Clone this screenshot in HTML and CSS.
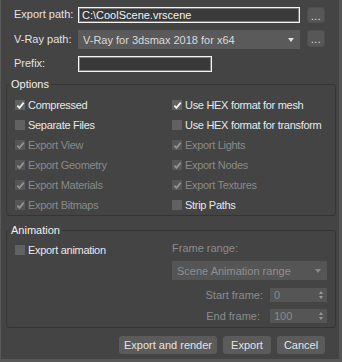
FILE: index.html
```html
<!DOCTYPE html>
<html>
<head>
<meta charset="utf-8">
<link rel="stylesheet" href="styles.css">
</head>
<body>
<div class="dlg">
  <div class="row r1">
    <span class="lbl">Export path:</span>
    <div class="input path">C:\CoolScene.vrscene</div>
    <div class="dots">...</div>
  </div>
  <div class="row r2">
    <span class="lbl">V-Ray path:</span>
    <div class="combo vray"><span>V-Ray for 3dsmax 2018 for x64</span><i class="arrow"></i></div>
    <div class="dots">...</div>
  </div>
  <div class="row r3">
    <span class="lbl">Prefix:</span>
    <div class="input prefix"></div>
  </div>

  <fieldset class="grp options">
    <legend>Options</legend>
    <div class="grid">
      <label class="chk on"><i class="box"><svg viewBox="0 0 10 10"><path d="M1.5 5.2 L3.8 7.6 L8.6 1.8" /></svg></i>Compressed</label>
      <label class="chk on"><i class="box"><svg viewBox="0 0 10 10"><path d="M1.5 5.2 L3.8 7.6 L8.6 1.8" /></svg></i>Use HEX format for mesh</label>
      <label class="chk"><i class="box"></i>Separate Files</label>
      <label class="chk"><i class="box"></i>Use HEX format for transform</label>
      <label class="chk on dis"><i class="box"><svg viewBox="0 0 10 10"><path d="M1.5 5.2 L3.8 7.6 L8.6 1.8" /></svg></i>Export View</label>
      <label class="chk on dis"><i class="box"><svg viewBox="0 0 10 10"><path d="M1.5 5.2 L3.8 7.6 L8.6 1.8" /></svg></i>Export Lights</label>
      <label class="chk on dis"><i class="box"><svg viewBox="0 0 10 10"><path d="M1.5 5.2 L3.8 7.6 L8.6 1.8" /></svg></i>Export Geometry</label>
      <label class="chk on dis"><i class="box"><svg viewBox="0 0 10 10"><path d="M1.5 5.2 L3.8 7.6 L8.6 1.8" /></svg></i>Export Nodes</label>
      <label class="chk on dis"><i class="box"><svg viewBox="0 0 10 10"><path d="M1.5 5.2 L3.8 7.6 L8.6 1.8" /></svg></i>Export Materials</label>
      <label class="chk on dis"><i class="box"><svg viewBox="0 0 10 10"><path d="M1.5 5.2 L3.8 7.6 L8.6 1.8" /></svg></i>Export Textures</label>
      <label class="chk on dis"><i class="box"><svg viewBox="0 0 10 10"><path d="M1.5 5.2 L3.8 7.6 L8.6 1.8" /></svg></i>Export Bitmaps</label>
      <label class="chk"><i class="box"></i>Strip Paths</label>
    </div>
  </fieldset>

  <fieldset class="grp anim">
    <legend>Animation</legend>
    <div class="animbody">
      <div class="animleft">
        <label class="chk"><i class="box"></i>Export animation</label>
      </div>
      <div class="animright">
        <div class="frlabel">Frame range:</div>
        <div class="combo range"><span>Scene Animation range</span><i class="arrow"></i></div>
        <div class="spinrow"><span class="slbl">Start frame:</span><div class="spin"><span>0</span><i class="updown"><i class="up"></i><i class="down"></i></i></div></div>
        <div class="spinrow end"><span class="slbl">End frame:</span><div class="spin"><span>100</span><i class="updown"><i class="up"></i><i class="down"></i></i></div></div>
      </div>
    </div>
  </fieldset>

  <div class="buttons">
    <div class="btn wide">Export and render</div>
    <div class="btn">Export</div>
    <div class="btn">Cancel</div>
  </div>
</div>
</body>
</html>
```

FILE: styles.css
```css
html, body {
  margin: 0;
  padding: 0;
  background: #444444;
}

.dlg {
  width: 342px;
  height: 362px;
  box-sizing: border-box;
  background: #444444;
  border-left: 1px solid #585858;
  border-right: 3px solid #555555;
  border-bottom: 3px solid #585858;
  padding-top: 7px;
  font-family: "Liberation Sans", Arial, sans-serif;
  font-size: 11px;
  color: #e2e2e2;
  white-space: nowrap;
}

.row {
  display: flex;
  align-items: flex-start;
  padding-left: 13px;
}

.r2 { margin-top: 7px; }
.r3 { margin-top: 7px; }

.lbl {
  width: 64px;
  line-height: 15px;
  flex: none;
}

.r2 .lbl { line-height: 18px; }

.input {
  box-sizing: border-box;
  height: 16px;
  border: 1px solid #f4f4f4;
  box-shadow: inset 0 0 0 1px #7a7a7a;
  background: #3a3a3a;
  color: #f2f2f2;
  padding-left: 3px;
  line-height: 14px;
  font-size: 11px;
}

.path { width: 222px; }
.prefix { width: 134px; }

.dots {
  width: 18px;
  height: 16px;
  margin-left: 7px;
  border-radius: 3px;
  background: #575757;
  color: #e6e6e6;
  text-align: center;
  line-height: 18px;
  font-size: 10px;
  letter-spacing: 0.5px;
  box-sizing: border-box;
  border: 1px solid #4e4e4e;
}

.r2 .dots { height: 17px; }

.combo {
  box-sizing: border-box;
  display: flex;
  align-items: center;
  justify-content: space-between;
  background: #5a5a5a;
  color: #dadada;
  padding: 0 6px 0 5px;
  font-size: 11px;
}

.vray {
  width: 222px;
  height: 19px;
}

.arrow {
  width: 0;
  height: 0;
  border-left: 3px solid transparent;
  border-right: 3px solid transparent;
  border-top: 4px solid #e0e0e0;
}

.grp {
  margin: 0 3px 0 5px;
  padding: 0;
  border: 1px solid #353535;
  border-radius: 3px;
  min-width: 0;
}

.grp legend {
  padding: 0 2px;
  margin-left: 2px;
  line-height: 13px;
  font-size: 11px;
  color: #f0f0f0;
}

.options { margin-top: 6px; }

.grid {
  display: grid;
  grid-template-columns: 157px 1fr;
  grid-auto-rows: 20px;
  padding: 4px 0 0 8px;
}

.chk {
  display: flex;
  align-items: center;
  gap: 3px;
  font-size: 11px;
  letter-spacing: -0.3px;
  color: #e8e8e8;
  height: 20px;
}

.chk.dis { color: #8a8a8a; }

.box {
  width: 10px;
  height: 10px;
  flex: none;
  background: #616161;
  display: flex;
  align-items: center;
  justify-content: center;
}

.chk.dis .box { background: #565656; }

.box svg {
  width: 9px;
  height: 9px;
  fill: none;
  stroke: #f4f4f4;
  stroke-width: 2;
}

.chk.dis .box svg { stroke: #929292; }

.anim { margin-top: 8px; }

.animbody {
  display: flex;
  padding: 3px 0 4px 8px;
}

.animleft {
  width: 157px;
  flex: none;
}

.animright {
  width: 155px;
  padding-top: 1px;
}

.frlabel {
  height: 14px;
  line-height: 14px;
  color: #8c8c8c;
  font-size: 11px;
}

.range {
  margin-top: 6px;
  height: 19px;
  background: #555555;
  color: #8f8f8f;
}

.range .arrow { border-top-color: #8a8a8a; }

.spinrow {
  display: flex;
  justify-content: flex-end;
  align-items: center;
  margin-top: 8px;
  height: 14px;
}

.spinrow.end { margin-top: 7px; }

.slbl {
  color: #8c8c8c;
  font-size: 11px;
  margin-right: 7px;
}

.spinrow.end .slbl { margin-right: 10px; }

.spin {
  width: 57px;
  height: 14px;
  box-sizing: border-box;
  background: #555555;
  color: #8a8a8a;
  display: flex;
  align-items: center;
  justify-content: space-between;
  padding: 0 4px 0 4px;
  font-size: 11px;
}

.updown {
  display: flex;
  flex-direction: column;
  gap: 2px;
}

.up, .down {
  width: 0;
  height: 0;
  border-left: 2.5px solid transparent;
  border-right: 2.5px solid transparent;
}

.up { border-bottom: 3px solid #9a9a9a; }
.down { border-top: 3px solid #9a9a9a; }

.buttons {
  display: flex;
  justify-content: flex-end;
  gap: 6px;
  margin-top: 8px;
  padding-right: 14px;
}

.btn {
  width: 48px;
  height: 18px;
  box-sizing: border-box;
  border-radius: 3px;
  background: #5b5b5b;
  color: #e4e4e4;
  text-align: center;
  line-height: 18px;
  font-size: 11px;
}

.btn.wide { width: 98px; }
```
